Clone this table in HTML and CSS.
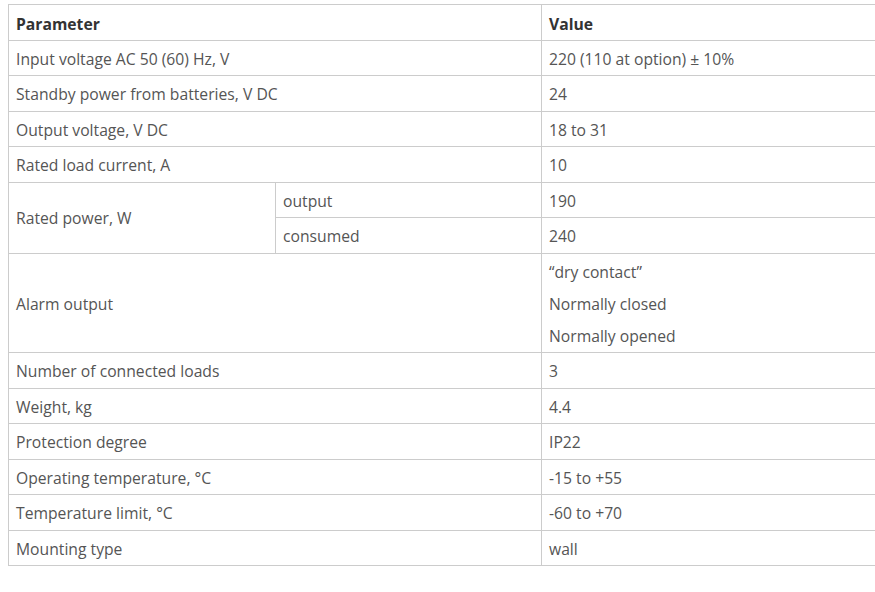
FILE: index.html
```html
<!DOCTYPE html>
<html>
<head>
<meta charset="utf-8">
<link rel="stylesheet" href="styles.css">
</head>
<body>
<div class="wrap">
<table class="spec">
  <colgroup>
    <col class="c1"><col class="c2"><col class="c3">
  </colgroup>
  <thead>
    <tr><th colspan="2">Parameter</th><th>Value</th></tr>
  </thead>
  <tbody>
    <tr><td colspan="2">Input voltage AC 50 (60) Hz, V</td><td>220 (110 at option) ± 10%</td></tr>
    <tr><td colspan="2">Standby power from batteries, V DC</td><td>24</td></tr>
    <tr><td colspan="2">Output voltage, V DC</td><td>18 to 31</td></tr>
    <tr><td colspan="2">Rated load current, A</td><td>10</td></tr>
    <tr><td rowspan="2">Rated power, W</td><td>output</td><td>190</td></tr>
    <tr><td>consumed</td><td>240</td></tr>
    <tr><td colspan="2">Alarm output</td><td><div class="lines"><span>“dry contact”</span><span>Normally closed</span><span>Normally opened</span></div></td></tr>
    <tr><td colspan="2">Number of connected loads</td><td>3</td></tr>
    <tr><td colspan="2">Weight, kg</td><td>4.4</td></tr>
    <tr><td colspan="2">Protection degree</td><td>IP22</td></tr>
    <tr><td colspan="2">Operating temperature, °C</td><td>-15 to +55</td></tr>
    <tr><td colspan="2">Temperature limit, °C</td><td>-60 to +70</td></tr>
    <tr><td colspan="2">Mounting type</td><td>wall</td></tr>
  </tbody>
</table>
</div>
</body>
</html>
```
FILE: styles.css
```css
html, body {
  margin: 0;
  padding: 0;
  background: #fff;
}
.wrap {
  padding: 4px 0 0 8px;
  overflow: hidden;
  width: 867px;
}
.spec {
  border-collapse: collapse;
  table-layout: fixed;
  width: 1000px;
  font-family: "Open Sans", "Noto Sans", sans-serif;
  font-size: 15.7px;
  color: #555;
}
.c1 { width: 267px; }
.c2 { width: 266px; }
.c3 { width: 467px; }
.spec th, .spec td {
  border: 1px solid #ccc;
  padding: 9px 6px 7px 7px;
  line-height: 18.5px;
  text-align: left;
  vertical-align: middle;
  font-weight: normal;
}
.spec th {
  font-weight: bold;
  color: #333;
  padding-top: 10px;
  padding-bottom: 6px;
}
.lines {
  display: flex;
  flex-direction: column;
  gap: 13.5px;
}
```
